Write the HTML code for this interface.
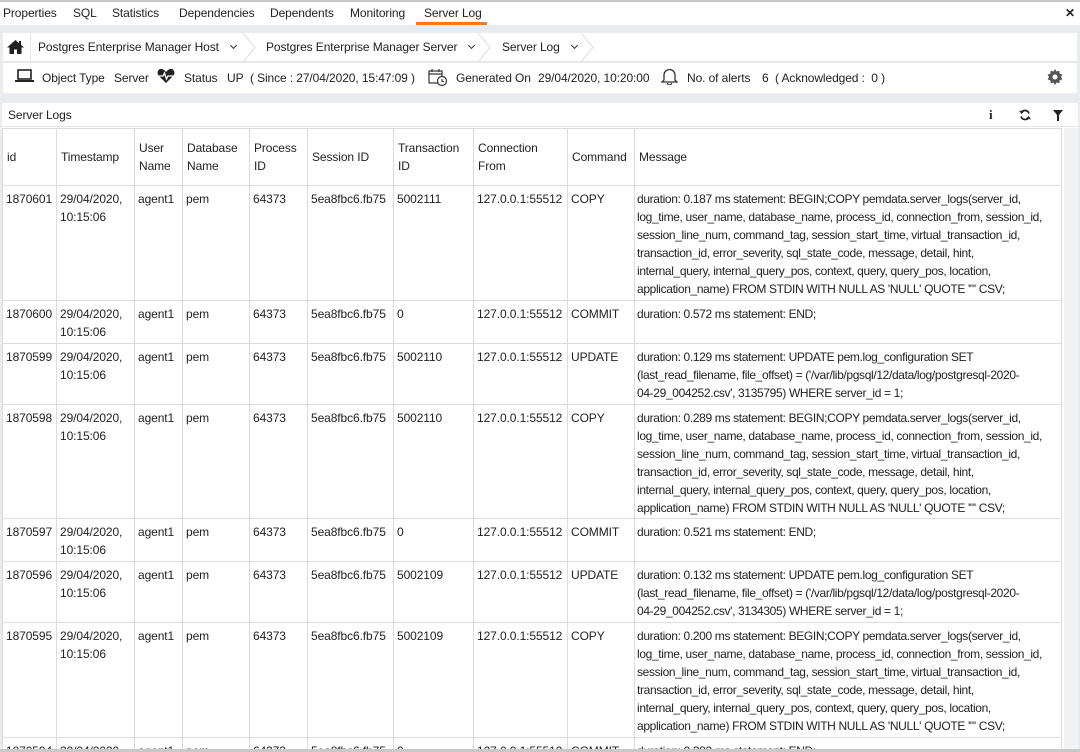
<!DOCTYPE html>
<html style="width:1080px;height:752px;overflow:hidden"><head><meta charset="utf-8"><style>
*{box-sizing:border-box;margin:0;padding:0}
body{width:1080px;height:752px;overflow:hidden;background:#e9ebee;font-family:"Liberation Sans",sans-serif;font-size:12px;letter-spacing:-0.1px;color:#222;position:relative}
.abs{position:absolute;white-space:nowrap}
.tabs{left:0;top:0;width:1080px;height:25px;background:#fff;border-top:2px solid #c8c8c8}
.tabs span{position:absolute;top:4px}
.bc{left:3px;top:33px;width:1074px;height:29px;background:#fff;border-bottom:1px solid #e4e4e4}
.info{left:3px;top:63px;width:1074px;height:30px;background:#fff}
.panel{left:2px;top:103px;width:1076px;height:649px;background:#fff}
.wrap{position:absolute;left:2px;top:128px;width:1060px;height:621px;overflow:hidden}
table{border-collapse:collapse;table-layout:fixed;width:1060px;background:#fff}
td,th{border:1px solid #dcdcdc;vertical-align:top;text-align:left;font-weight:normal;padding:4px 3px 0 3px;line-height:18px;overflow:hidden;white-space:nowrap}
th{vertical-align:middle;padding:0 4px;height:57px;white-space:normal}
td.m{font-size:12px;letter-spacing:-0.35px;padding-left:2px}
.chev{display:inline-block;width:5px;height:5px;border-right:1.8px solid #333;border-bottom:1.8px solid #333;transform:rotate(45deg);margin-left:12px;position:relative;top:-3px}
.sep{position:absolute;top:0;width:14px;height:29px}
</style></head><body>
<div class="abs tabs">
<span style="left:3px">Properties</span><span style="left:73px">SQL</span><span style="left:112px">Statistics</span><span style="left:179px">Dependencies</span><span style="left:270px">Dependents</span><span style="left:350px">Monitoring</span><span style="left:424px">Server Log</span>
<div class="abs" style="left:416px;top:20px;width:71px;height:3px;background:#f07a2b"></div>
<span style="left:1065px;top:4px;font-weight:bold;font-size:12px">✕</span>
</div>
<div class="abs bc">
<svg class="abs" style="left:4px;top:7px" width="17" height="14" viewBox="0 0 17 14"><path d="M8.5 0L0 7.5h2.5V14h4.5V9.5h3V14h4.5V7.5H17z" fill="#222"/><rect x="12" y="1" width="2" height="4" fill="#222"/></svg>
<div class="abs" style="left:27px;top:0;width:1px;height:29px;background:#e4e4e4"></div>
<span class="abs" style="left:35px;top:7px">Postgres Enterprise Manager Host<i class="chev"></i></span>
<svg class="sep" style="left:240px"><path d="M0 0L12 14.5L0 29" fill="none" stroke="#ddd"/></svg>
<span class="abs" style="left:263px;top:7px">Postgres Enterprise Manager Server<i class="chev"></i></span>
<svg class="sep" style="left:475px"><path d="M0 0L12 14.5L0 29" fill="none" stroke="#ddd"/></svg>
<span class="abs" style="left:499px;top:7px">Server Log<i class="chev"></i></span>
<svg class="sep" style="left:578px"><path d="M0 0L12 14.5L0 29" fill="none" stroke="#ddd"/></svg>
</div>
<div class="abs info">
<svg class="abs" style="left:12px;top:6px" width="19" height="14"><rect x="3" y="1" width="13" height="9" fill="none" stroke="#222" stroke-width="1.6"/><rect x="0" y="11" width="19" height="2" fill="#222"/></svg>
<span class="abs" style="left:39px;top:8px">Object Type</span><span class="abs" style="left:111px;top:8px">Server</span>
<svg class="abs" style="left:154px;top:5px" width="18" height="16"><path d="M9 15L1.5 7.5C-1 4 2 0 5 1c2 .5 3 2 4 3 1-1 2-2.5 4-3 3-1 6 3 3.5 6.5z" fill="#222"/><path d="M1 8h5l1.5-3 2 6 1.5-3h6" fill="none" stroke="#fff" stroke-width="1.3"/></svg>
<span class="abs" style="left:181px;top:8px">Status</span><span class="abs" style="left:224px;top:8px">UP&nbsp; ( Since : 27/04/2020, 15:47:09 )</span>
<svg class="abs" style="left:425px;top:5px" width="20" height="19"><rect x="1" y="3" width="13" height="12" fill="none" stroke="#333" stroke-width="1.2"/><path d="M1 6h13M4 1v3M11 1v3" stroke="#333" stroke-width="1.2"/><circle cx="14" cy="13" r="4.5" fill="#fff" stroke="#333" stroke-width="1.2"/><path d="M14 11v2.5h2" stroke="#333" fill="none"/></svg>
<span class="abs" style="left:453px;top:8px">Generated On</span><span class="abs" style="left:535px;top:8px">29/04/2020, 10:20:00</span>
<svg class="abs" style="left:658px;top:4px" width="17" height="18"><path d="M3 13V8a5.5 5.5 0 0 1 11 0v5l2 2H1z" fill="none" stroke="#333" stroke-width="1.3"/><path d="M6.5 16a2 2 0 0 0 4 0" fill="none" stroke="#333" stroke-width="1.3"/></svg>
<span class="abs" style="left:684px;top:8px">No. of alerts</span><span class="abs" style="left:759px;top:8px">6&nbsp; ( Acknowledged :&nbsp; 0 )</span>
<svg class="abs" style="left:1044px;top:6px" width="16" height="16" viewBox="0 0 16 16"><path d="M8 0l1.5 2.5 2.8-.8.3 2.9 2.8 1-1.4 2.4 1.4 2.4-2.8 1-.3 2.9-2.8-.8L8 16l-1.5-2.5-2.8.8-.3-2.9-2.8-1L2 8 .6 5.6l2.8-1 .3-2.9 2.8.8z" fill="#555"/><circle cx="8" cy="8" r="2.5" fill="#fff"/></svg>
</div>
<div class="abs panel">
<span class="abs" style="left:6px;top:5px">Server Logs</span>
<div class="abs" style="left:0;top:23px;width:1076px;height:1px;background:#e4e4e4"></div>
<span class="abs" style="left:987px;top:4px;font-weight:bold;font-family:'Liberation Serif',serif;font-size:13px">i</span>
<svg class="abs" style="left:1017px;top:6px" width="12" height="12" viewBox="0 0 12 12"><path d="M10 4.5A4.3 4.3 0 0 0 2 4M2 7.5A4.3 4.3 0 0 0 10 8" fill="none" stroke="#222" stroke-width="1.7"/><path d="M0 1.5L2.5 5 5 2.5zM12 10.5L9.5 7 7 9.5z" fill="#222"/></svg>
<svg class="abs" style="left:1051px;top:7px" width="10" height="11"><path d="M0 0h10L6 5v6H4V5z" fill="#222"/></svg>
<div class="abs" style="left:1062px;top:25px;width:14px;height:624px;background:#f1f2f4"></div>
</div>
<div class="wrap">
<table>
<colgroup><col style="width:54px"><col style="width:78px"><col style="width:48px"><col style="width:67px"><col style="width:58px"><col style="width:86px"><col style="width:80px"><col style="width:94px"><col style="width:67px"><col></colgroup>
<tr><th>id</th><th>Timestamp</th><th>User Name</th><th>Database Name</th><th>Process ID</th><th>Session ID</th><th>Transaction ID</th><th>Connection From</th><th>Command</th><th>Message</th></tr>
<tr style="height:115px"><td>1870601</td><td>29/04/2020,<br>10:15:06</td><td>agent1</td><td>pem</td><td>64373</td><td>5ea8fbc6.fb75</td><td>5002111</td><td>127.0.0.1:55512</td><td>COPY</td><td class="m">duration: 0.187 ms statement: BEGIN;COPY pemdata.server_logs(server_id,<br>log_time, user_name, database_name, process_id, connection_from, session_id,<br>session_line_num, command_tag, session_start_time, virtual_transaction_id,<br>transaction_id, error_severity, sql_state_code, message, detail, hint,<br>internal_query, internal_query_pos, context, query, query_pos, location,<br>application_name) FROM STDIN WITH NULL AS 'NULL' QUOTE '"' CSV;</td></tr>
<tr style="height:43px"><td>1870600</td><td>29/04/2020,<br>10:15:06</td><td>agent1</td><td>pem</td><td>64373</td><td>5ea8fbc6.fb75</td><td>0</td><td>127.0.0.1:55512</td><td>COMMIT</td><td class="m">duration: 0.572 ms statement: END;</td></tr>
<tr style="height:61px"><td>1870599</td><td>29/04/2020,<br>10:15:06</td><td>agent1</td><td>pem</td><td>64373</td><td>5ea8fbc6.fb75</td><td>5002110</td><td>127.0.0.1:55512</td><td>UPDATE</td><td class="m">duration: 0.129 ms statement: UPDATE pem.log_configuration SET<br>(last_read_filename, file_offset) = ('/var/lib/pgsql/12/data/log/postgresql-2020-<br>04-29_004252.csv', 3135795) WHERE server_id = 1;</td></tr>
<tr style="height:114px"><td>1870598</td><td>29/04/2020,<br>10:15:06</td><td>agent1</td><td>pem</td><td>64373</td><td>5ea8fbc6.fb75</td><td>5002110</td><td>127.0.0.1:55512</td><td>COPY</td><td class="m">duration: 0.289 ms statement: BEGIN;COPY pemdata.server_logs(server_id,<br>log_time, user_name, database_name, process_id, connection_from, session_id,<br>session_line_num, command_tag, session_start_time, virtual_transaction_id,<br>transaction_id, error_severity, sql_state_code, message, detail, hint,<br>internal_query, internal_query_pos, context, query, query_pos, location,<br>application_name) FROM STDIN WITH NULL AS 'NULL' QUOTE '"' CSV;</td></tr>
<tr style="height:43px"><td>1870597</td><td>29/04/2020,<br>10:15:06</td><td>agent1</td><td>pem</td><td>64373</td><td>5ea8fbc6.fb75</td><td>0</td><td>127.0.0.1:55512</td><td>COMMIT</td><td class="m">duration: 0.521 ms statement: END;</td></tr>
<tr style="height:61px"><td>1870596</td><td>29/04/2020,<br>10:15:06</td><td>agent1</td><td>pem</td><td>64373</td><td>5ea8fbc6.fb75</td><td>5002109</td><td>127.0.0.1:55512</td><td>UPDATE</td><td class="m">duration: 0.132 ms statement: UPDATE pem.log_configuration SET<br>(last_read_filename, file_offset) = ('/var/lib/pgsql/12/data/log/postgresql-2020-<br>04-29_004252.csv', 3134305) WHERE server_id = 1;</td></tr>
<tr style="height:115px"><td>1870595</td><td>29/04/2020,<br>10:15:06</td><td>agent1</td><td>pem</td><td>64373</td><td>5ea8fbc6.fb75</td><td>5002109</td><td>127.0.0.1:55512</td><td>COPY</td><td class="m">duration: 0.200 ms statement: BEGIN;COPY pemdata.server_logs(server_id,<br>log_time, user_name, database_name, process_id, connection_from, session_id,<br>session_line_num, command_tag, session_start_time, virtual_transaction_id,<br>transaction_id, error_severity, sql_state_code, message, detail, hint,<br>internal_query, internal_query_pos, context, query, query_pos, location,<br>application_name) FROM STDIN WITH NULL AS 'NULL' QUOTE '"' CSV;</td></tr>
<tr style="height:43px"><td>1870594</td><td>29/04/2020,<br>10:15:06</td><td>agent1</td><td>pem</td><td>64373</td><td>5ea8fbc6.fb75</td><td>0</td><td>127.0.0.1:55512</td><td>COMMIT</td><td class="m">duration: 0.382 ms statement: END;</td></tr>
</table>
</div>
<div class="abs" style="left:0;top:749px;width:1080px;height:3px;background:#c8c8c8"></div>
</body></html>
